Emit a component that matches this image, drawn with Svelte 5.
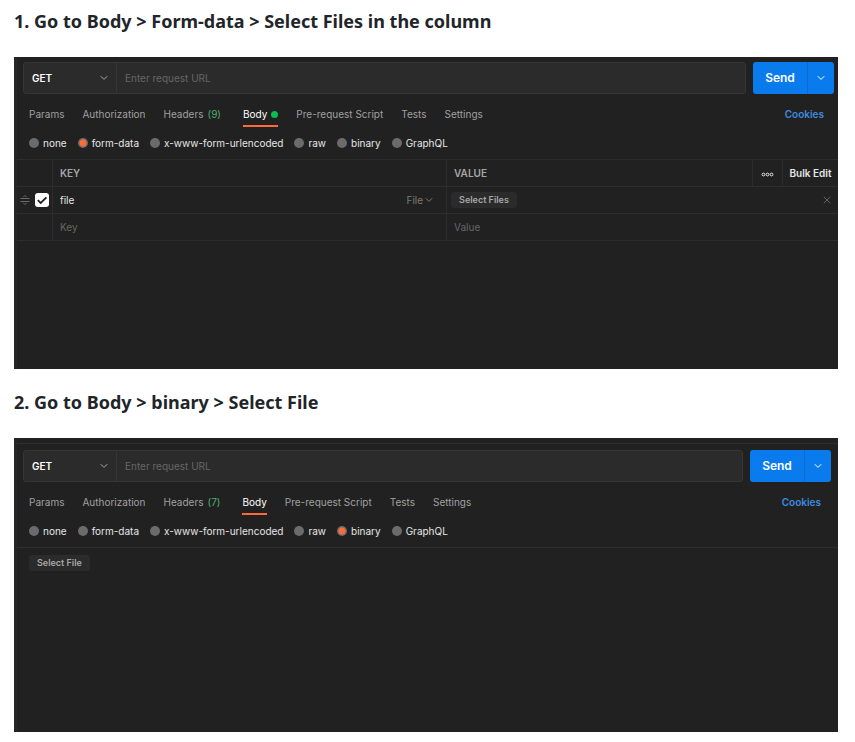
<script>
  const bodyTypes = ['none', 'form-data', 'x-www-form-urlencoded', 'raw', 'binary', 'GraphQL'];

  let formBody = $state('form-data');
  let binaryBody = $state('binary');
  let enabled = $state(true);
</script>

{#snippet chevron()}
  <svg class="chevron" viewBox="0 0 8 8" width="8" height="8" aria-hidden="true">
    <path d="M0.8 2.2 4 5.4 7.2 2.2" fill="none" stroke="currentColor" stroke-width="1" />
  </svg>
{/snippet}

{#snippet urlBar(id)}
  <div class="url-bar">
    <div class="url-box">
      <span class="method">
        <select id="{id}-method" aria-label="Request method">
          <option>GET</option>
          <option>POST</option>
          <option>PUT</option>
        </select>
        {@render chevron()}
      </span>
      <input class="url" id="{id}-url" type="text" aria-label="Request URL" placeholder="Enter request URL" />
    </div>
    <div class="send-group">
      <button class="send" type="button">Send</button>
      <button class="send-more" type="button" aria-label="Send options">{@render chevron()}</button>
    </div>
  </div>
{/snippet}

{#snippet tabs(headerCount, hasBody)}
  <nav class="tabs">
    <a href="#params">Params</a>
    <a href="#authorization">Authorization</a>
    <a href="#headers" class="headers">Headers <span class="count">({headerCount})</span></a>
    <a href="#body" class="active">Body{#if hasBody}<i class="dot"></i>{/if}</a>
    <a href="#pre-request">Pre-request Script</a>
    <a href="#tests">Tests</a>
    <a href="#settings">Settings</a>
    <a href="#cookies" class="cookies">Cookies</a>
  </nav>
{/snippet}

<main>
  <h2>1. Go to Body &gt; Form-data &gt; Select Files in the column</h2>
  <section class="panel form-panel">
    {@render urlBar('form')}
    {@render tabs(9, true)}
    <div class="types" role="radiogroup" aria-label="Body type">
      {#each bodyTypes as type}
        <label><input type="radio" name="form-type" value={type} bind:group={formBody} />{type}</label>
      {/each}
    </div>
    <table>
      <colgroup>
        <col class="col-check" />
        <col class="col-key" />
        <col />
        <col class="col-more" />
        <col class="col-bulk" />
      </colgroup>
      <thead>
        <tr>
          <th></th>
          <th>KEY</th>
          <th>VALUE</th>
          <th class="center">
            <button class="plain" type="button" aria-label="Column options">
              <svg viewBox="0 0 13 5" width="13" height="5" aria-hidden="true">
                <g fill="none" stroke="currentColor" stroke-width="1">
                  <circle cx="2.5" cy="2.5" r="1.4" /><circle cx="6.5" cy="2.5" r="1.4" /><circle cx="10.5" cy="2.5" r="1.4" />
                </g>
              </svg>
            </button>
          </th>
          <th class="center"><button class="plain bulk" type="button">Bulk Edit</button></th>
        </tr>
      </thead>
      <tbody>
        <tr>
          <td class="check-cell">
            <div class="row-tools">
              <svg class="drag" viewBox="0 0 10 10" width="10" height="10" aria-hidden="true">
                <path d="M0.5 3.5h9M0.5 6.5h9" fill="none" stroke="currentColor" stroke-width="0.9" />
                <path d="M3.2 1.8 5 0.6 6.8 1.8M3.2 8.2 5 9.4 6.8 8.2" fill="none" stroke="currentColor" stroke-width="0.7" />
              </svg>
              <span class="check">
                <input type="checkbox" aria-label="Include row" bind:checked={enabled} />
                {#if enabled}
                  <svg viewBox="0 0 14 14" width="14" height="14" aria-hidden="true">
                    <path d="M2.8 7.2 5.7 10 11.4 4.3" fill="none" stroke="#212121" stroke-width="1.8" />
                  </svg>
                {/if}
              </span>
            </div>
          </td>
          <td>
            <div class="cell">
              <input class="field" type="text" value="file" aria-label="Key" />
              <span class="kind">
                <select aria-label="Value type"><option>File</option><option>Text</option></select>
                {@render chevron()}
              </span>
            </div>
          </td>
          <td class="value-cell" colspan="3">
            <div class="cell">
              <button class="pick" type="button">Select Files</button>
              <button class="plain remove" type="button" aria-label="Remove row">
                <svg viewBox="0 0 8 8" width="8" height="8" aria-hidden="true">
                  <path d="M0.8 0.8 7.2 7.2M7.2 0.8 0.8 7.2" stroke="currentColor" stroke-width="0.9" />
                </svg>
              </button>
            </div>
          </td>
        </tr>
        <tr>
          <td></td>
          <td><div class="cell"><input class="field" type="text" placeholder="Key" aria-label="New key" /></div></td>
          <td colspan="3"><div class="cell"><input class="field" type="text" placeholder="Value" aria-label="New value" /></div></td>
        </tr>
      </tbody>
    </table>
  </section>

  <h2>2. Go to Body &gt; binary &gt; Select File</h2>
  <section class="panel binary-panel">
    {@render urlBar('binary')}
    {@render tabs(7, false)}
    <div class="types" role="radiogroup" aria-label="Body type">
      {#each bodyTypes as type}
        <label><input type="radio" name="binary-type" value={type} bind:group={binaryBody} />{type}</label>
      {/each}
    </div>
    <div class="file-area"><button class="pick" type="button">Select File</button></div>
  </section>
</main>

<style>
  :global(body) {
    margin: 0;
    background: #fff;
  }
  main {
    padding: 8px 17px 10px 14px;
    font-family: Inter, 'Liberation Sans', sans-serif;
    font-size: 10px;
    line-height: 14px;
  }
  main * {
    box-sizing: border-box;
  }
  h2 {
    margin: 0 0 22px;
    color: #212529;
    font: 700 18px/27px 'Noto Sans', 'Open Sans', sans-serif;
  }
  button,
  input,
  select {
    margin: 0;
    padding: 0;
    border: 0;
    border-radius: 0;
    background: none;
    color: inherit;
    font: inherit;
    appearance: none;
    outline: none;
  }
  button {
    cursor: pointer;
  }
  svg {
    display: block;
    flex: none;
  }
  .panel {
    background: #212121;
    border-left: 3px solid #262626;
    color: #e6e6e6;
  }
  .form-panel {
    min-height: 312px;
    margin-bottom: 20px;
    padding-top: 5px;
  }
  .binary-panel {
    min-height: 294px;
    padding-top: 5px;
  }
  .binary-panel::before {
    content: '';
    display: block;
    height: 7px;
    border-top: 1px solid #2d2d2d;
    box-sizing: border-box;
  }

  .url-bar {
    display: flex;
    gap: 7px;
    height: 32px;
    padding: 0 4px 0 6px;
  }
  .binary-panel .url-bar {
    padding-right: 7px;
  }
  .url-box {
    display: flex;
    flex: 1;
    min-width: 0;
    border: 1px solid #363636;
    border-radius: 3px;
    background: #2b2b2b;
  }
  .method {
    display: flex;
    align-items: center;
    width: 93px;
    padding: 0 8px;
    border-right: 1px solid #363636;
    color: #a6a6a6;
  }
  .method select {
    flex: 1;
    color: #fff;
    font-weight: 600;
  }
  .url {
    flex: 1;
    min-width: 0;
    padding: 0 8px;
  }
  ::placeholder {
    color: #666;
    opacity: 1;
  }
  .send-group {
    display: flex;
    overflow: hidden;
    border-radius: 3px;
    background: #097bed;
    color: #fff;
  }
  .send {
    width: 54px;
    font-size: 12px;
    font-weight: 600;
  }
  .send-more {
    display: flex;
    align-items: center;
    justify-content: center;
    width: 27px;
    border-left: 1px solid #0a6cd0;
  }

  .tabs {
    display: flex;
    gap: 18px;
    padding: 13px 14px 0 12px;
  }
  .tabs a {
    display: flex;
    align-items: center;
    gap: 4px;
    height: 20px;
    padding-bottom: 4px;
    border-bottom: 2px solid transparent;
    color: #a0a0a0;
    text-decoration: none;
    white-space: nowrap;
  }
  .tabs .headers {
    margin-right: 4px;
  }
  .count {
    color: #4fae75;
  }
  .tabs .active {
    border-color: #ff6c37;
    color: #fff;
  }
  .dot {
    width: 7px;
    height: 7px;
    border-radius: 50%;
    background: #0cbb52;
  }
  .tabs .cookies {
    margin-left: auto;
    color: #3d8adf;
    font-weight: 600;
  }
  .binary-panel .tabs {
    padding-right: 17px;
  }

  .types {
    display: flex;
    gap: 11px;
    padding: 9px 12px;
  }
  .types label {
    display: flex;
    align-items: center;
    gap: 4px;
    white-space: nowrap;
  }
  .types input {
    width: 10px;
    height: 10px;
    border-radius: 50%;
    background: #6b6b6b;
  }
  .types input:checked {
    background: radial-gradient(circle at center, #ff6c37 3px, #6b6b6b 4px);
  }

  table {
    width: 100%;
    table-layout: fixed;
    border-collapse: separate;
    border-spacing: 0;
    border-top: 1px solid #2d2d2d;
  }
  .col-check {
    width: 36px;
  }
  .col-key {
    width: 48%;
  }
  .col-more {
    width: 30px;
  }
  .col-bulk {
    width: 55px;
  }
  th,
  td {
    height: 27px;
    padding: 0 7px;
    border-bottom: 1px solid #2d2d2d;
    border-right: 1px solid #2d2d2d;
    text-align: left;
  }
  th {
    color: #a6a6a6;
    font-weight: 600;
  }
  th:last-child,
  td:last-child {
    border-right: 0;
  }
  .center {
    padding: 0;
    text-align: center;
  }
  .plain {
    color: #e6e6e6;
    white-space: nowrap;
  }
  .center .plain svg {
    display: inline-block;
    vertical-align: middle;
  }
  .check-cell {
    padding: 0 3px;
  }
  .row-tools,
  .cell {
    display: flex;
    align-items: center;
  }
  .row-tools {
    gap: 5px;
  }
  .drag {
    color: #757575;
  }
  .check {
    position: relative;
    width: 14px;
    height: 14px;
  }
  .check input {
    display: block;
    width: 14px;
    height: 14px;
    border-radius: 3px;
    background: #fff;
  }
  .check svg {
    position: absolute;
    inset: 0;
    pointer-events: none;
  }
  .field {
    flex: 1;
    min-width: 0;
  }
  .kind {
    display: flex;
    align-items: center;
    gap: 2px;
    padding-right: 6px;
    color: #7a7a7a;
  }
  .kind select {
    field-sizing: content;
  }
  .value-cell {
    padding: 0 7px 0 4px;
  }
  .plain.remove {
    margin-left: auto;
    color: #6b6b6b;
  }
  .pick {
    height: 16px;
    padding: 0 8px;
    border-radius: 3px;
    background: #2b2b2b;
    color: #a6a6a6;
    font-size: 9px;
    font-weight: 600;
  }
  .file-area {
    padding: 7px 12px;
    border-top: 1px solid #2d2d2d;
  }
</style>
